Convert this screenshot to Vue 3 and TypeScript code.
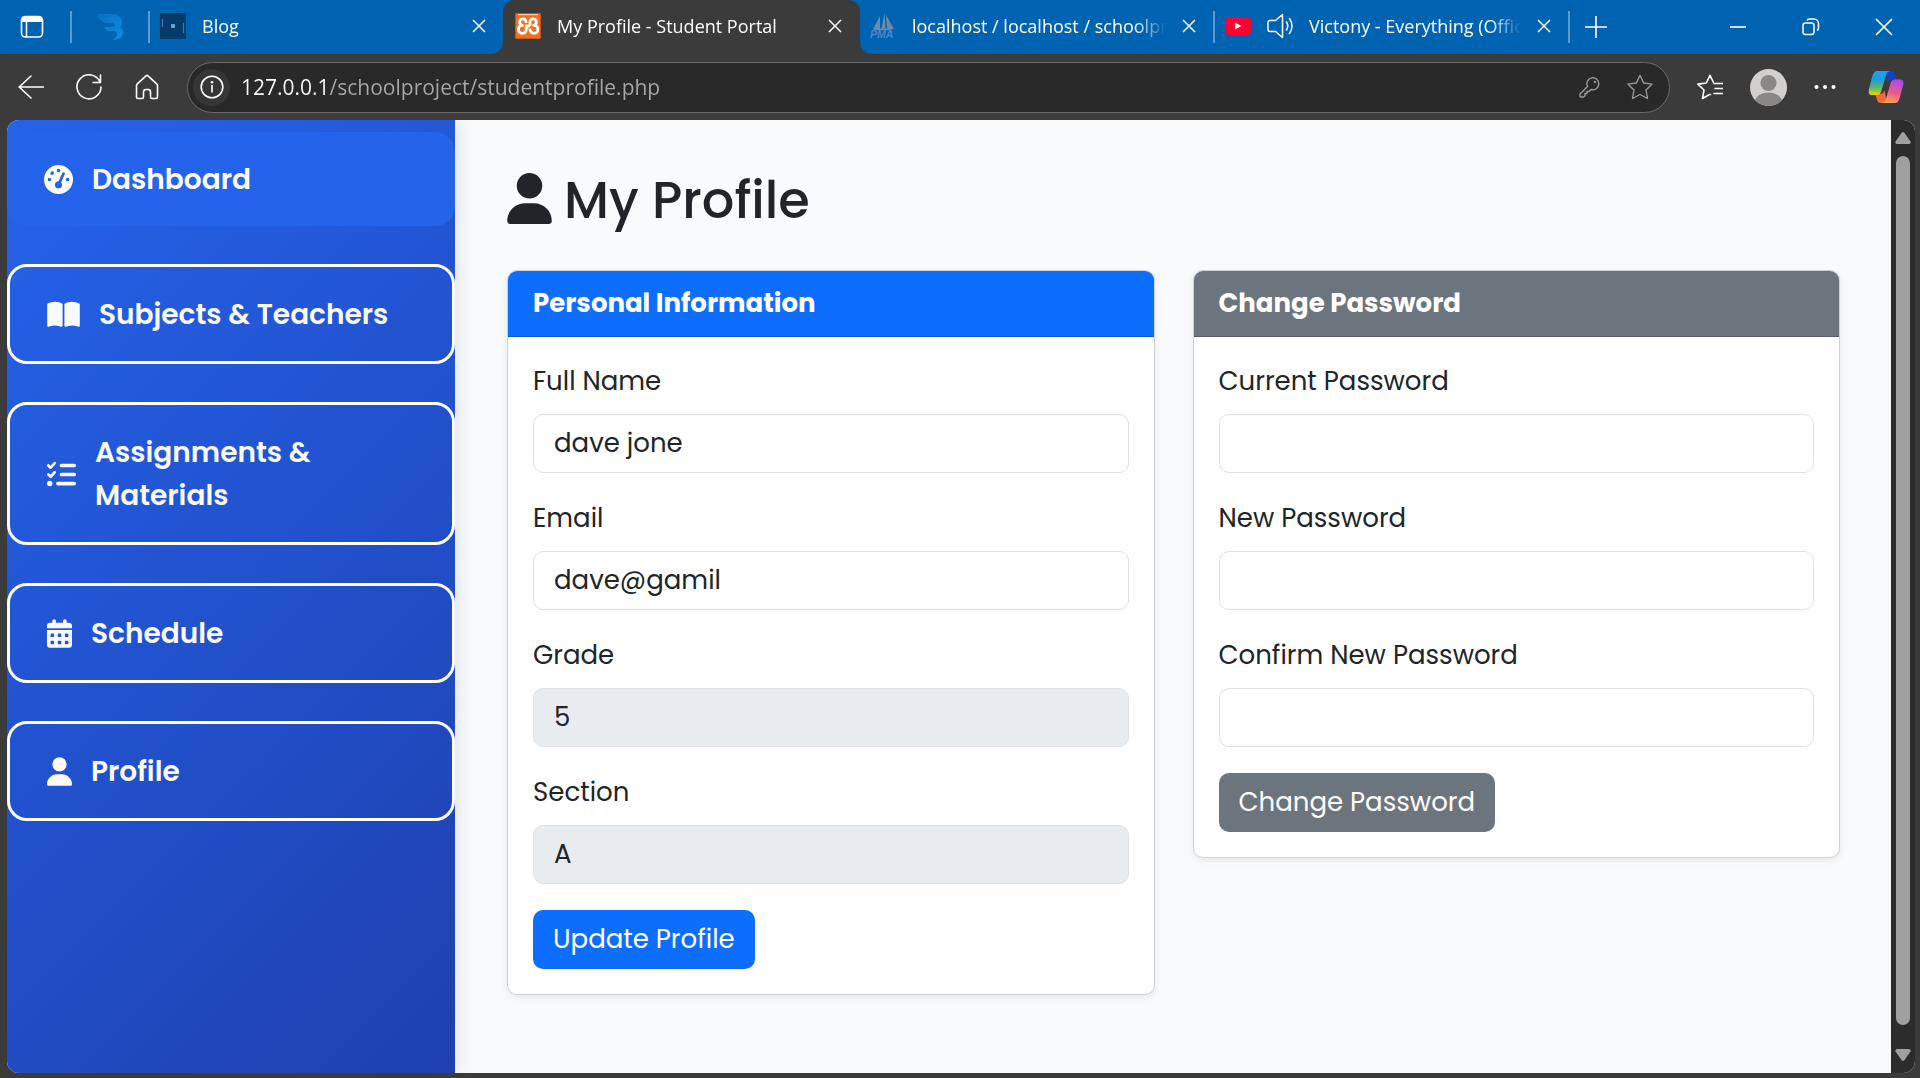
<script setup lang="ts">
import { ref } from 'vue'

interface NavItem {
  label: string
  width: number
  viewBox: string
  path: string
  active?: boolean
}

const userPath =
  'M224 256A128 128 0 1 0 224 0a128 128 0 1 0 0 256zm-45.7 48C79.8 304 0 383.8 0 482.3C0 498.7 13.3 512 29.7 512H418.3c16.4 0 29.7-13.3 29.7-29.7C448 383.8 368.2 304 269.7 304H178.3z'

const daySquares = [256, 384]
  .flatMap((y) => [64, 192, 320].map((x) => `M${x + 16} ${y}h32q16 0 16 16v32q0 16 -16 16h-32q-16 0 -16 -16v-32q0 -16 16 -16z`))
  .join('')

const navItems: NavItem[] = [
  {
    label: 'Dashboard',
    width: 29,
    viewBox: '0 0 512 512',
    active: true,
    path: 'M0 256a256 256 0 1 1 512 0A256 256 0 1 1 0 256zM288 96a32 32 0 1 0 -64 0 32 32 0 1 0 64 0zM256 416c35.3 0 64-28.7 64-64c0-17.4-6.9-33.1-18.1-44.6L366 161.7c5.3-12.1-.2-26.3-12.3-31.6s-26.3 .2-31.6 12.3L257.9 288c-.6 0-1.3 0-1.9 0c-35.3 0-64 28.7-64 64s28.7 64 64 64zM176 144a32 32 0 1 0 -64 0 32 32 0 1 0 64 0zM96 288a32 32 0 1 0 0-64 32 32 0 1 0 0 64zm352-32a32 32 0 1 0 -64 0 32 32 0 1 0 64 0z',
  },
  {
    label: 'Subjects & Teachers',
    width: 33,
    viewBox: '0 0 576 512',
    path: 'M249.6 471.5c10.8 3.8 22.4-4.1 22.4-15.5V78.6c0-4.2-1.6-8.4-5-11C247.4 52 202.4 32 144 32C93.5 32 46.3 45.3 18.1 56.1C6.8 60.5 0 71.7 0 83.8V454.1c0 11.9 12.8 20.2 24.1 16.5C55.6 460.1 105.5 448 144 448c33.9 0 79 14 105.6 23.5zm76.8 0C353 462 398.1 448 432 448c38.5 0 88.4 12.1 119.9 22.6c11.3 3.8 24.1-4.6 24.1-16.5V83.8c0-12.1-6.8-23.3-18.1-27.6C529.7 45.3 482.5 32 432 32c-58.4 0-103.4 20-123 35.6c-3.3 2.6-5 6.8-5 11V456c0 11.4 11.7 19.3 22.4 15.5z',
  },
  {
    label: 'Assignments & Materials',
    width: 29,
    viewBox: '0 0 512 512',
    path: 'M152.1 38.2c9.9 8.9 10.7 24 1.8 33.9l-72 80c-4.4 4.9-10.6 7.8-17.2 7.9s-12.9-2.4-17.6-7L7 113C-2.3 103.6-2.3 88.4 7 79s24.6-9.4 33.9 0l22.1 22.1 55.1-61.2c8.9-9.9 24-10.7 33.9-1.8zm0 160c9.9 8.9 10.7 24 1.8 33.9l-72 80c-4.4 4.9-10.6 7.8-17.2 7.9s-12.9-2.4-17.6-7L7 273c-9.4-9.4-9.4-24.6 0-33.9s24.6-9.4 33.9 0l22.1 22.1 55.1-61.2c8.9-9.9 24-10.7 33.9-1.8zM224 96c0-17.7 14.3-32 32-32H480c17.7 0 32 14.3 32 32s-14.3 32-32 32H256c-17.7 0-32-14.3-32-32zm0 160c0-17.7 14.3-32 32-32H480c17.7 0 32 14.3 32 32s-14.3 32-32 32H256c-17.7 0-32-14.3-32-32zM160 416c0-17.7 14.3-32 32-32H480c17.7 0 32 14.3 32 32s-14.3 32-32 32H192c-17.7 0-32-14.3-32-32zM48 368a48 48 0 1 1 0 96 48 48 0 1 1 0-96z',
  },
  {
    label: 'Schedule',
    width: 25,
    viewBox: '0 0 448 512',
    path:
      'M128 0c17.7 0 32 14.3 32 32V64H288V32c0-17.7 14.3-32 32-32s32 14.3 32 32V64h48c26.5 0 48 21.5 48 48v48H0V112C0 85.5 21.5 64 48 64H96V32c0-17.7 14.3-32 32-32zM0 192H448V464c0 26.5-21.5 48-48 48H48c-26.5 0-48-21.5-48-48V192z' +
      daySquares,
  },
  { label: 'Profile', width: 25, viewBox: '0 0 448 512', path: userPath },
]

const address = ref('127.0.0.1/schoolproject/studentprofile.php')

const profile = ref([
  { id: 'full-name', label: 'Full Name', type: 'text', value: 'dave jone', readonly: false },
  { id: 'email', label: 'Email', type: 'text', value: 'dave@gamil', readonly: false },
  { id: 'grade', label: 'Grade', type: 'text', value: '5', readonly: true },
  { id: 'section', label: 'Section', type: 'text', value: 'A', readonly: true },
])

const passwords = ref([
  { id: 'current-password', label: 'Current Password', value: '' },
  { id: 'new-password', label: 'New Password', value: '' },
  { id: 'confirm-password', label: 'Confirm New Password', value: '' },
])
</script>

<template>
  <div class="window">
    <header class="tabstrip">
      <div class="strip-left">
        <button class="corner" aria-label="Tab actions">
          <svg width="24" height="24" viewBox="0 0 24 24" fill="none" stroke="#fff">
            <rect x="1.5" y="1.5" width="21" height="20.500" rx="4" stroke-width="1.600" />
            <path d="M1.500 7V5a4 4 0 0 1 4-4h13a4 4 0 0 1 4 4v2z" fill="#fff" stroke="none" />
            <path d="M6.500 7v15" stroke-width="1.500" />
          </svg>
        </button>
        <span class="divider"></span>
        <button class="pinned" aria-label="Pinned tab">
          <svg width="28" height="28" viewBox="0 0 28 28">
            <defs>
              <linearGradient id="wing" x1="0" y1="0" x2="1" y2="1">
                <stop offset="0" stop-color="#0a6fc4" />
                <stop offset="1" stop-color="#0a8fe0" />
              </linearGradient>
            </defs>
            <path d="M1 1h15c6 0 10 3 10 8 0 2-1 4-2 5 2 1 3 3 3 5 0 5-4 8-11 8 4-2 5-4 5-6s-1-3-3-3h-4c-3 0-5-1-6-4h8c2 0 3-1 3-2s-1-2-3-2h-4C7 10 3 7 1 1z" fill="url(#wing)" />
          </svg>
        </button>
        <span class="divider"></span>
        <div class="tab">
          <svg class="favicon" viewBox="0 0 26 26">
            <rect width="26" height="26" fill="#063a68" />
            <path d="M2.500 6v8M23.500 10v10" stroke="#2f7db8" stroke-width="1.200" />
            <rect x="11" y="11" width="4" height="4" rx="1" fill="#5fa3d8" />
          </svg>
          <span class="tab-title">Blog</span>
          <button class="close" aria-label="Close tab">
            <svg width="14" height="14" viewBox="0 0 14 14"><path d="M1 1l12 12M13 1L1 13" /></svg>
          </button>
        </div>
      </div>
      <div class="active-slot">
        <div class="tab active">
          <svg class="favicon" viewBox="0 0 26 26">
            <rect width="26" height="26" rx="2" fill="#ee6f1f" />
            <path d="M3 1.500h20" stroke="#fbc49b" stroke-width="1.500" />
            <rect x="0.500" y="0.500" width="25" height="25" rx="2" fill="none" stroke="#c9540f" />
            <path
              d="M11 10V8.500A3.200 3.200 0 1 0 7.500 12.300A4 4 0 1 0 11.300 17V13H15M15 15.500V17A4 4 0 1 0 18.500 12.300A3.200 3.200 0 1 0 15 8.500V13"
              fill="none"
              stroke="#fff"
              stroke-width="2.800"
              stroke-linejoin="round"
            />
          </svg>
          <span class="tab-title">My Profile - Student Portal</span>
          <button class="close" aria-label="Close tab">
            <svg width="14" height="14" viewBox="0 0 14 14"><path d="M1 1l12 12M13 1L1 13" /></svg>
          </button>
        </div>
      </div>
      <div class="strip-right">
        <div class="tab">
          <svg class="favicon" viewBox="0 0 26 26">
            <path d="M10 3v13H3zM14.500 0l-3 16h4zM16 2l8 14h-7z" fill="#6c8ba6" />
            <path d="M2 17c8-2 15-2 22 0z" fill="#6c8ba6" />
            <text x="0" y="25" font-family="Liberation Sans, sans-serif" font-size="10.500" font-weight="700" font-style="italic" fill="#4d86cc">PMA</text>
          </svg>
          <span class="tab-title">localhost / localhost / schoolproject</span>
          <button class="close" aria-label="Close tab">
            <svg width="14" height="14" viewBox="0 0 14 14"><path d="M1 1l12 12M13 1L1 13" /></svg>
          </button>
        </div>
        <span class="divider"></span>
        <div class="tab">
          <svg class="favicon" viewBox="0 0 26 26">
            <rect y="4" width="26" height="18" rx="4" fill="#ff0033" />
            <path d="M10 9.500v7l6.500-3.500z" fill="#fff" />
          </svg>
          <svg class="favicon" viewBox="0 0 26 26" fill="none" stroke="#fff" stroke-width="1.500" stroke-linecap="round" stroke-linejoin="round">
            <path d="M15.500 1.500v23l-7-6H3a2 2 0 0 1-2-2v-7a2 2 0 0 1 2-2h5.500zM19.500 9q2.500 4 0 8M22.500 5.500q5 7.500 0 15" />
          </svg>
          <span class="tab-title">Victony - Everything (Official Video)</span>
          <button class="close" aria-label="Close tab">
            <svg width="14" height="14" viewBox="0 0 14 14"><path d="M1 1l12 12M13 1L1 13" /></svg>
          </button>
        </div>
        <span class="divider"></span>
        <button class="new-tab" aria-label="New tab">
          <svg width="22" height="22" viewBox="0 0 22 22" stroke="#fff" stroke-width="1.600"><path d="M11 0v22M0 11h22" /></svg>
        </button>
        <div class="controls">
          <button aria-label="Minimize">
            <svg width="16" height="16" viewBox="0 0 16 16" stroke="#fff" stroke-width="1.600"><path d="M0 8h16" /></svg>
          </button>
          <button aria-label="Restore">
            <svg width="18" height="18" viewBox="0 0 18 18" fill="none" stroke="#fff" stroke-width="1.500">
              <rect x="1" y="5" width="11" height="11.500" rx="2.500" />
              <path d="M5 2.500C5.500 1.500 6.500 1 7.500 1H12a4.500 4.500 0 0 1 4.500 4.500V10c0 1-.5 2-1.500 2.500" />
            </svg>
          </button>
          <button aria-label="Close window">
            <svg width="18" height="18" viewBox="0 0 18 18" stroke="#fff" stroke-width="1.700"><path d="M1 1l16 16M17 1L1 17" /></svg>
          </button>
        </div>
      </div>
    </header>

    <div class="toolbar">
      <div class="nav-buttons">
        <button aria-label="Back">
          <svg width="26" height="26" viewBox="0 0 26 26"><path d="M25.500 13H1M13 2L1.200 13L13 24" /></svg>
        </button>
        <button aria-label="Refresh">
          <svg width="26" height="26" viewBox="0 0 26 26"><path d="M24 8A12 12 0 1 0 25 13M24.500 1v7.500H17" /></svg>
        </button>
        <button aria-label="Home">
          <svg width="26" height="26" viewBox="0 0 26 26"><path d="M2.500 11.500Q2.500 10.500 3.300 9.800L12 1.800q1-.8 2 0l8.700 8q.8.7.8 1.700V23q0 1.500-1.500 1.500h-4q-1.500 0-1.500-1.500v-5q0-2.500-2.500-2.500h-2q-2.500 0-2.500 2.500v5q0 1.500-1.500 1.500H4q-1.500 0-1.500-1.500z" /></svg>
        </button>
      </div>
      <div class="address-bar">
        <button class="site-info" aria-label="Site information">
          <svg width="24" height="24" viewBox="0 0 24 24">
            <circle cx="12" cy="12" r="10.800" />
            <path d="M12 10.500V17" />
            <circle cx="12" cy="7.300" r="1.300" fill="#fff" stroke="none" />
          </svg>
        </button>
        <input class="address" v-model="address" aria-label="Address" spellcheck="false" />
        <button class="in-bar" aria-label="Saved passwords">
          <svg width="22" height="22" viewBox="0 0 22 22">
            <path d="M8.500 10.500A6 6 0 1 1 12 13.500L10 15.500H8v2H6v2L4.500 21H2q-1 0-1-1v-2z" />
            <circle cx="16" cy="6" r="1.200" fill="#9a9a9a" stroke="none" />
          </svg>
        </button>
        <button class="in-bar" aria-label="Add to favorites">
          <svg width="26" height="26" viewBox="0 0 26 26"><path d="M13 1.300l3.700 7.700 8.400 1.100-6.100 5.900 1.500 8.500L13 20.500l-7.500 4L7 16 .9 10.100l8.400-1.100z" /></svg>
        </button>
      </div>
      <div class="tool-buttons">
        <button aria-label="Favorites">
          <svg width="26" height="26" viewBox="0 0 26 26"><path d="M13.500 20.500L12.500 20.500L5.500 24.500L7 16L.9 10.100L9.300 9L13 1.300L16.500 8.500M17 9.500h9M18 14.500h8M17 19.500h9" /></svg>
        </button>
        <button aria-label="Account">
          <svg width="37" height="37" viewBox="0 0 37 37">
            <clipPath id="avatar-clip"><circle cx="18.500" cy="18.500" r="18.500" /></clipPath>
            <g clip-path="url(#avatar-clip)" stroke="none">
              <rect width="37" height="37" fill="#d2d0ce" />
              <circle cx="18.500" cy="14" r="8" fill="#8a8886" />
              <ellipse cx="18.500" cy="34" rx="14" ry="10.500" fill="#8a8886" />
            </g>
          </svg>
        </button>
        <button aria-label="Settings and more">
          <svg width="22" height="22" viewBox="0 0 22 22">
            <g fill="#fff" stroke="none"><circle cx="2.500" cy="11" r="2" /><circle cx="11" cy="11" r="2" /><circle cx="19.500" cy="11" r="2" /></g>
          </svg>
        </button>
        <button class="copilot" aria-label="Copilot">
          <svg width="36" height="34" viewBox="0 0 36 34">
            <defs>
              <linearGradient id="cp-a" x1="0" y1="0" x2="0" y2="1">
                <stop offset="0" stop-color="#1aa5f0" />
                <stop offset="0.350" stop-color="#1c9be0" />
                <stop offset="0.700" stop-color="#5fb860" />
                <stop offset="1" stop-color="#f6d20c" />
              </linearGradient>
              <linearGradient id="cp-b" x1="0.600" y1="0" x2="0.300" y2="1">
                <stop offset="0" stop-color="#a64cf0" />
                <stop offset="0.500" stop-color="#ee5590" />
                <stop offset="1" stop-color="#ffa550" />
              </linearGradient>
            </defs>
            <g stroke="none">
              <path d="M17 1h6.500q2.500 0 3.500 3l1.500 5.500H24q-3 0-4 3z" fill="#1541c8" />
              <path d="M19 33h-6.500Q10 33 9 30L7.500 24H12q3 0 4.500-3.500z" fill="#f4693a" />
              <path d="M9 1h13q-3 .500-4 4l-4.500 15.500Q12.300 25 9 25H4Q-.5 25 1 19L4.500 5.500Q6 1 9 1z" fill="url(#cp-a)" />
              <path d="M27 33H14q3-.500 4-4l4.500-15.500Q23.700 9.500 27 9.500h5q4.500 0 3 6L31.500 28.500Q30 33 27 33z" fill="url(#cp-b)" />
            </g>
          </svg>
        </button>
      </div>
    </div>

    <div class="viewport">
      <nav class="sidebar">
        <a v-for="item in navItems" :key="item.label" href="#" class="nav-item" :class="{ current: item.active }">
          <svg :width="item.width" height="29" :viewBox="item.viewBox"><path :d="item.path" /></svg>
          <span>{{ item.label }}</span>
        </a>
      </nav>

      <main class="content">
        <h1 class="heading">
          <svg width="45" height="51" viewBox="0 0 448 512"><path :d="userPath" /></svg>
          <span>My Profile</span>
        </h1>
        <div class="cards">
          <form class="card" @submit.prevent>
            <h2 class="card-header primary">Personal Information</h2>
            <div class="card-body">
              <div v-for="field in profile" :key="field.id" class="field">
                <label :for="field.id">{{ field.label }}</label>
                <input :id="field.id" v-model="field.value" :type="field.type" :readonly="field.readonly" />
              </div>
              <button type="submit" class="btn primary">Update Profile</button>
            </div>
          </form>
          <form class="card" @submit.prevent>
            <h2 class="card-header secondary">Change Password</h2>
            <div class="card-body">
              <div v-for="field in passwords" :key="field.id" class="field">
                <label :for="field.id">{{ field.label }}</label>
                <input :id="field.id" v-model="field.value" type="password" />
              </div>
              <button type="submit" class="btn secondary">Change Password</button>
            </div>
          </form>
        </div>
      </main>

      <div class="scrollbar" aria-hidden="true">
        <svg width="16" height="12" viewBox="0 0 16 12"><path d="M6.500 1Q8-.8 9.500 1L15.500 9.500Q16 12 14 12H2Q0 12 .5 9.500z" /></svg>
        <div class="thumb"></div>
        <svg width="16" height="12" viewBox="0 0 16 12"><path d="M6.500 11Q8 12.800 9.500 11L15.500 2.500Q16 0 14 0H2Q0 0 .5 2.500z" /></svg>
      </div>
    </div>
  </div>
</template>

<style>
body {
  margin: 0;
  background: #3b3b3b;
}
</style>

<style scoped>
* {
  box-sizing: border-box;
}
button {
  font: inherit;
  color: inherit;
  background: none;
  border: 0;
  padding: 0;
  cursor: pointer;
}
svg {
  display: block;
  flex: none;
}
.window {
  display: flex;
  flex-direction: column;
  min-height: 100vh;
  background: #3b3b3b;
  font-family: 'Segoe UI', 'Open Sans', sans-serif;
  color: #fff;
}

.tabstrip {
  display: flex;
  height: 54px;
  font-size: 18px;
}
.strip-left,
.strip-right {
  display: flex;
  align-items: center;
  background: #0063b1;
  min-width: 0;
}
.strip-left {
  border-bottom-right-radius: 12px;
}
.strip-right {
  flex: 1;
  border-bottom-left-radius: 12px;
}
.corner {
  width: 70px;
  display: flex;
  padding-left: 20px;
}
.pinned {
  width: 76px;
  display: flex;
  justify-content: center;
}
.divider {
  flex: none;
  width: 2px;
  height: 32px;
  background: #5c9bce;
}
.active-slot {
  display: flex;
  background: linear-gradient(#0063b1 24px, #3b3b3b 24px);
}
.tab {
  display: flex;
  align-items: center;
  gap: 16px;
  width: 353px;
  height: 54px;
  padding: 0 17px 2px 10px;
}
.tab.active {
  width: 357px;
  padding: 0 18px 2px 12px;
  background: #3b3b3b;
  border-radius: 12px 12px 0 0;
}
.favicon {
  width: 26px;
  height: 26px;
}
.tab-title {
  flex: 1;
  min-width: 0;
  overflow: hidden;
  white-space: nowrap;
  mask-image: linear-gradient(90deg, #000 calc(100% - 32px), transparent);
}
.close svg {
  stroke: #fff;
  stroke-width: 1.5;
}
.new-tab {
  width: 52px;
  display: flex;
  justify-content: center;
}
.controls {
  display: flex;
  margin-left: auto;
}
.controls button {
  width: 73px;
  height: 54px;
  display: flex;
  align-items: center;
  justify-content: center;
}

.toolbar {
  display: flex;
  align-items: center;
  height: 66px;
  padding: 0 16px 0 18px;
  gap: 27px;
}
.toolbar svg {
  fill: none;
  stroke: #fff;
  stroke-width: 1.6;
  stroke-linecap: round;
  stroke-linejoin: round;
}
.nav-buttons {
  display: flex;
  gap: 32px;
}
.address-bar {
  flex: 1;
  display: flex;
  align-items: center;
  height: 51px;
  padding: 0 16px 0 5px;
  gap: 26px;
  background: #292929;
  border: 1px solid #6a6a6a;
  border-radius: 26px;
}
.site-info {
  width: 37px;
  height: 37px;
  display: flex;
  align-items: center;
  justify-content: center;
  background: #363636;
  border-radius: 50%;
  margin-right: -15px;
}
.address {
  flex: 1;
  min-width: 0;
  border: 0;
  padding: 0;
  outline: 0;
  font: inherit;
  font-size: 21px;
  line-height: 30px;
  color: transparent;
  background: linear-gradient(90deg, #fff 87px, #a8a8a8 87px);
  background-clip: text;
}
.toolbar .in-bar svg {
  stroke: #9a9a9a;
  stroke-width: 1.4;
}
.tool-buttons {
  display: flex;
  align-items: center;
  gap: 27px;
}
.copilot {
  margin-left: 5px;
}

.viewport {
  flex: 1;
  display: flex;
  margin: 0 5px 5px 7px;
  border-radius: 12px;
  overflow: hidden;
  background: #f8fafc;
  font-family: Poppins, Inter, sans-serif;
  color: #212529;
}
.sidebar {
  flex: 0 0 448px;
  display: flex;
  flex-direction: column;
  gap: 38px;
  padding-top: 12px;
  background: linear-gradient(135deg, #2563eb, #1e40af);
  box-shadow: 3px 0 16px rgba(0, 0, 0, 0.1);
}
.nav-item {
  display: flex;
  align-items: center;
  gap: 19px;
  padding: 26px 37px 25px;
  border: 3px solid #fff;
  border-radius: 20px;
  color: #f8fafc;
  font-size: 28px;
  font-weight: 600;
  line-height: 43px;
  text-decoration: none;
}
.nav-item.current {
  border: 0;
  color: #fff;
  background: #2563eb;
}
.nav-item svg {
  fill: currentColor;
  fill-rule: evenodd;
}

.content {
  flex: 1;
  min-width: 0;
  padding: 48px 51px 48px 52px;
}
.heading {
  display: flex;
  align-items: center;
  gap: 12px;
  margin: 0 0 38px;
  font-size: 51px;
  font-weight: 500;
  line-height: 64px;
}
.heading svg {
  fill: currentColor;
  margin-bottom: 4px;
}
.cards {
  display: flex;
  align-items: flex-start;
  gap: 38px;
}
.card {
  flex: 1;
  min-width: 0;
  background: #fff;
  border: 1px solid #d0d2d4;
  border-radius: 10px;
  box-shadow: 0 3px 7px rgba(0, 0, 0, 0.08);
  font-size: 26px;
  line-height: 39px;
}
.card-header {
  margin: 0;
  padding: 13px 25px;
  border-bottom: 1px solid rgba(0, 0, 0, 0.18);
  border-radius: 9px 9px 0 0;
  color: #fff;
  font-size: 26px;
  font-weight: 700;
}
.primary {
  background-color: #0d6efd;
}
.secondary {
  background-color: #6c757d;
}
.card-body {
  padding: 25px;
}
.field {
  display: flex;
  flex-direction: column;
  gap: 13px;
  margin-bottom: 26px;
}
.field input {
  width: 100%;
  height: 59px;
  padding: 0 20px;
  border: 1px solid #dee2e6;
  border-radius: 10px;
  background: #fff;
  color: inherit;
  font: inherit;
}
.field input:read-only {
  background: #e9ecef;
}
.btn {
  display: block;
  height: 59px;
  padding: 0 20px;
  border-radius: 10px;
  color: #fff;
}

.scrollbar {
  flex: 0 0 24px;
  display: flex;
  flex-direction: column;
  align-items: center;
  gap: 12px;
  padding: 12px 0;
  background: #2c2c2c;
}
.scrollbar svg {
  fill: #9f9f9f;
}
.thumb {
  flex: 1;
  width: 14px;
  margin-bottom: 12px;
  border-radius: 7px;
  background: #9f9f9f;
}
</style>
